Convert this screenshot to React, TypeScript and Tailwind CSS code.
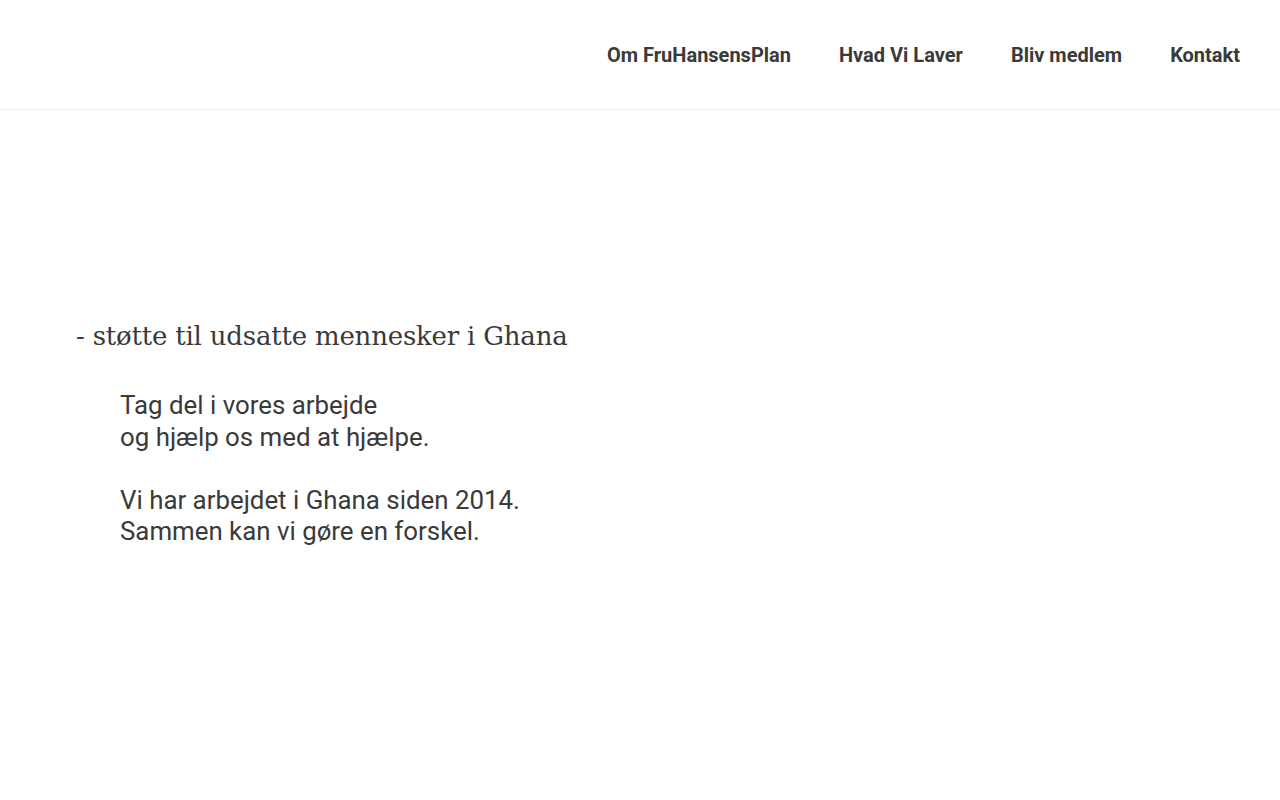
export default function App() {
  const links = ["Om FruHansensPlan", "Hvad Vi Laver", "Bliv medlem", "Kontakt"];
  return (
    <div className="min-h-screen bg-white text-[#333333]" style={{ fontFamily: "Roboto, 'Liberation Sans', sans-serif" }}>
      <header className="h-[110px] border-b border-[#eeeeee] flex items-center justify-end pr-10">
        <nav className="flex items-center gap-12">
          {links.map((l) => (
            <a key={l} href="#" className="text-[20px] font-bold text-[#3a3a3a]">
              {l}
            </a>
          ))}
        </nav>
      </header>
      <main className="pt-[206px] pl-[76px]">
        <h2 className="text-[26px] leading-[40px] tracking-[-0.2px] text-[#3a3a3a]" style={{ fontFamily: "'DejaVu Serif', 'Liberation Serif', serif" }}>
          - støtte til udsatte mennesker i Ghana
        </h2>
        <div className="mt-[34px] pl-[44px] text-[25.85px] leading-[31.5px] text-[#3a3a3a]">
          <p>
            Tag del i vores arbejde
            <br />
            og hjælp os med at hjælpe.
          </p>
          <p className="mt-[31.5px]">
            Vi har arbejdet i Ghana siden 2014.
            <br />
            Sammen kan vi gøre en forskel.
          </p>
        </div>
      </main>
    </div>
  );
}
